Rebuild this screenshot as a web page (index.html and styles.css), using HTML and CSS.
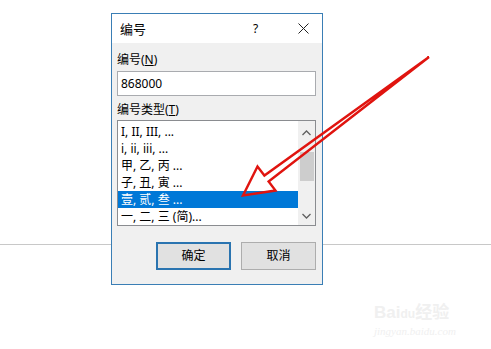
FILE: index.html
```html
<!DOCTYPE html>
<html lang="zh-CN">
<head>
    <meta charset="UTF-8">
    <title>编号</title>
    <link rel="stylesheet" href="styles.css">
</head>
<body>

    <div class="page-rule"></div>

    <div class="dialog">
        <div class="title-bar">
            <span class="title">编号</span>
            <span class="help">?</span>
            <span class="close">
                <svg width="11" height="11" viewBox="0 0 11 11">
                    <path d="M0.5 0.5 L10.5 10.5 M10.5 0.5 L0.5 10.5" stroke="#222" stroke-width="1" fill="none"/>
                </svg>
            </span>
        </div>

        <div class="dialog-body">
            <div class="label">编号(<u>N</u>)</div>
            <div class="text-input">868000</div>

            <div class="label">编号类型(<u>T</u>)</div>
            <div class="list-box">
                <div class="list-items">
                    <div class="list-item">I, II, III, ...</div>
                    <div class="list-item">i, ii, iii, ...</div>
                    <div class="list-item">甲, 乙, 丙 ...</div>
                    <div class="list-item">子, 丑, 寅 ...</div>
                    <div class="list-item selected">壹, 贰, 叁 ...</div>
                    <div class="list-item">一, 二, 三 (简)...</div>
                </div>
                <div class="scrollbar">
                    <svg class="arrow-up" width="9" height="6" viewBox="0 0 9 6">
                        <path d="M0.5 5 L4.5 1 L8.5 5" stroke="#606060" stroke-width="1.3" fill="none"/>
                    </svg>
                    <div class="thumb"></div>
                    <svg class="arrow-down" width="9" height="6" viewBox="0 0 9 6">
                        <path d="M0.5 1 L4.5 5 L8.5 1" stroke="#606060" stroke-width="1.3" fill="none"/>
                    </svg>
                </div>
            </div>

            <div class="buttons">
                <div class="btn btn-default">确定</div>
                <div class="btn">取消</div>
            </div>
        </div>
    </div>

    <!-- red arrow drawn over the screenshot -->
    <svg class="annotation" width="491" height="349" viewBox="0 0 491 349">
        <path d="M429 57 L268.6 181.5 L275.5 190.5 L243 195.5 L257.5 166.5 L264.4 175.5 Z"
              stroke="#e0140f" stroke-width="2.4" stroke-linejoin="miter" fill="none"/>
    </svg>

    <div class="watermark">
        <div class="wm-logo">Bai<span class="wm-du">du</span>经验</div>
        <div class="wm-url">jingyan.baidu.com</div>
    </div>

</body>
</html>
```

FILE: styles.css
```css
body {
    margin: 0;
    padding: 0;
    width: 491px;
    height: 349px;
    background: #fff;
    font-family: "Noto Sans", "Noto Sans CJK SC", sans-serif;
    font-size: 12px;
    color: #000;
    position: relative;
    overflow: hidden;
}

.page-rule {
    margin-top: 244px;
    height: 1px;
    background-color: #c8c8c8;
}

.dialog {
    position: absolute;
    left: 111px;
    top: 13px;
    width: 210px;
    height: 270px;
    border: 1px solid #3a7eb5;
    background-color: #f0f0f0;
    display: flex;
    flex-direction: column;
}

.title-bar {
    height: 29px;
    background-color: #fff;
    display: flex;
    align-items: center;
    padding-left: 8px;
}

.title {
    flex: 1;
    font-size: 13px;
}

.help {
    width: 20px;
    margin-right: 25px;
    font-size: 12px;
}

.close {
    width: 18px;
    margin-right: 6px;
    display: flex;
    align-items: center;
}

.dialog-body {
    padding: 0 6px 0 5px;
    display: flex;
    flex-direction: column;
}

.label {
    height: 16px;
    line-height: 16px;
    margin-top: 9px;
    margin-bottom: 3px;
}

.label u {
    text-underline-offset: 1px;
}

.text-input {
    height: 23px;
    line-height: 23px;
    border: 1px solid #a9abaf;
    background-color: #fff;
    padding-left: 3px;
}

.text-input + .label {
    margin-top: 6px;
    margin-bottom: 2px;
}

.list-box {
    height: 104px;
    border: 1px solid #8a8c90;
    background-color: #fff;
    display: flex;
}

.list-items {
    flex: 1;
    padding-top: 2px;
}

.list-item {
    height: 17px;
    line-height: 17px;
    padding-left: 3px;
    white-space: nowrap;
}

.list-item.selected {
    background-color: #0078d7;
    color: #fff;
}

.scrollbar {
    width: 17px;
    background-color: #f0f0f0;
    display: flex;
    flex-direction: column;
    align-items: center;
}

.arrow-up {
    margin-top: 9px;
}

.thumb {
    width: 14px;
    height: 29px;
    margin-top: 16px;
    background-color: #cdcdcd;
}

.arrow-down {
    margin-top: auto;
    margin-bottom: 6px;
}

.buttons {
    display: flex;
    justify-content: flex-end;
    gap: 10px;
    margin-top: 16px;
}

.btn {
    width: 73px;
    height: 26px;
    line-height: 26px;
    text-align: center;
    background-color: #e1e1e1;
    border: 1px solid #adadad;
}

.btn-default {
    width: 71px;
    height: 24px;
    line-height: 24px;
    border: 2px solid #2a74b0;
}

.annotation {
    position: absolute;
    left: 0;
    top: 0;
}

.watermark {
    position: absolute;
    left: 374px;
    top: 303px;
    color: #f0f0f0;
}

.wm-logo {
    font-family: "Liberation Sans", "Noto Sans CJK SC", sans-serif;
    font-size: 17px;
    font-weight: bold;
    line-height: 20px;
}

.wm-du {
    font-size: 12px;
}

.wm-url {
    font-family: "Liberation Serif", serif;
    font-size: 11px;
    font-style: italic;
    line-height: 14px;
}
```
